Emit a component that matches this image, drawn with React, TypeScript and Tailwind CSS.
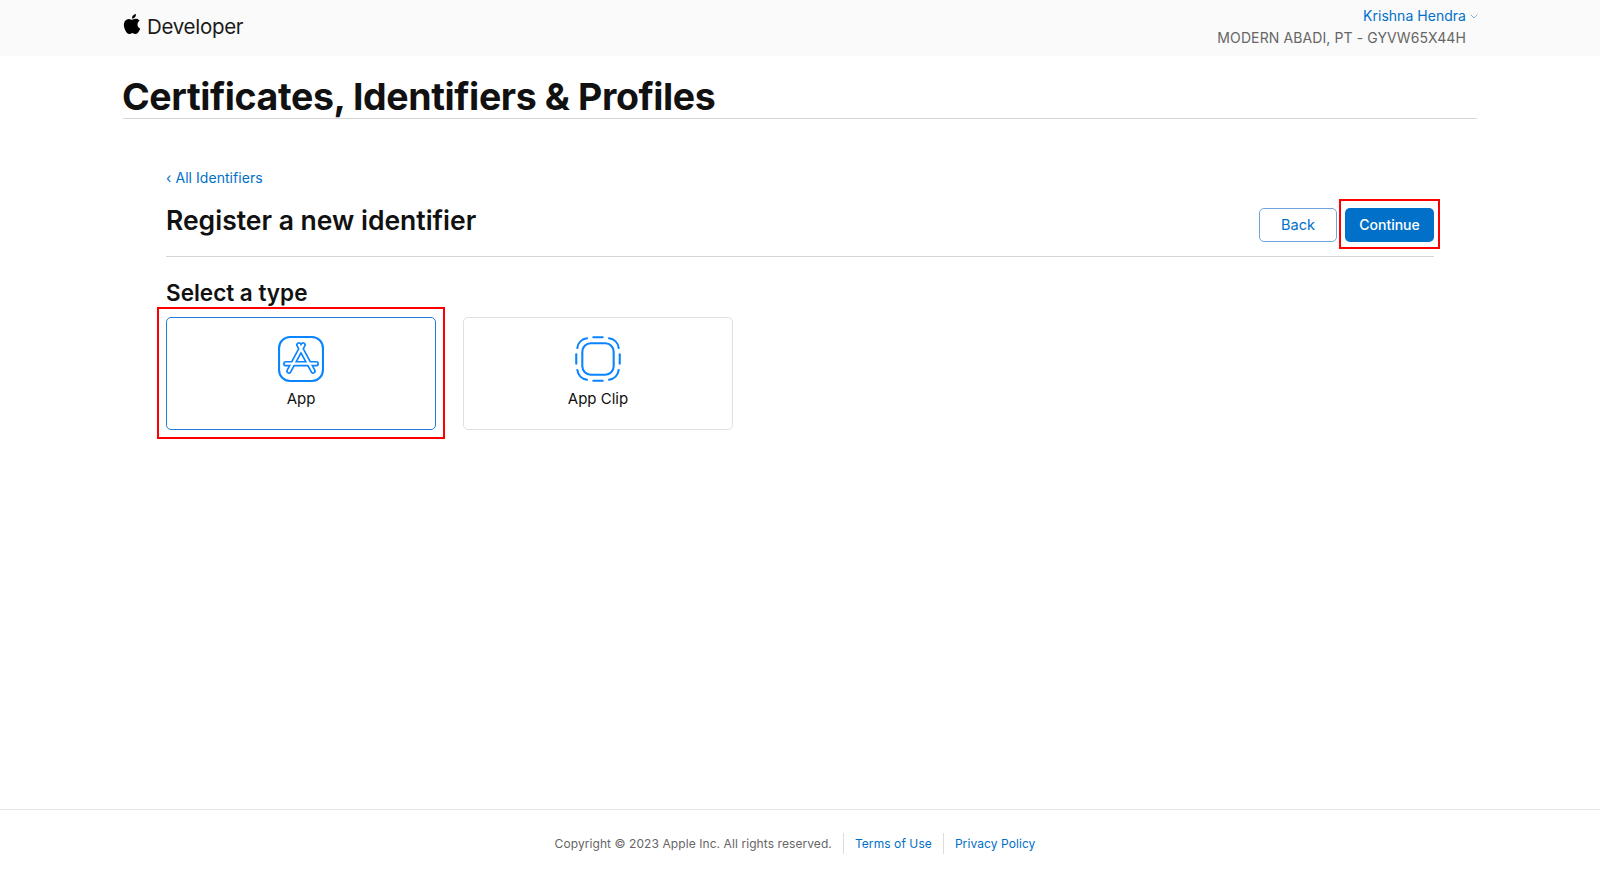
import { SiApple } from 'react-icons/si'

// App Store style mark: outlined sticks, drawn as thick blue lines with a thin white core
function AppIcon() {
  const sticks = ['M24 8.5 L10.5 33.5', 'M20 8.5 L33.5 33.5', 'M7.5 26.5 H36.5']
  return (
    <svg width="46" height="46" viewBox="0 0 44 44" fill="none">
      <rect x="1" y="1" width="42" height="42" rx="10.5" stroke="#0a84ff" strokeWidth="2" />
      {sticks.map((d) => (
        <path key={d} d={d} stroke="#0a84ff" strokeWidth="5.4" strokeLinecap="round" />
      ))}
      {sticks.map((d) => (
        <path key={d + 'w'} d={d} stroke="#fff" strokeWidth="2.2" strokeLinecap="round" />
      ))}
    </svg>
  )
}

function AppClipIcon() {
  return (
    <svg width="46" height="46" viewBox="0 0 44 44" fill="none" stroke="#0a84ff" strokeWidth="2" strokeLinecap="round">
      <rect x="7" y="7" width="30" height="30" rx="8" />
      <path d="M17.5 1.2 H26.5" />
      <path d="M17.5 42.8 H26.5" />
      <path d="M1.2 17.5 V26.5" />
      <path d="M42.8 17.5 V26.5" />
      <path d="M2.2 11.5 C2.8 6.5 6.5 2.8 11.5 2.2" />
      <path d="M32.5 2.2 C37.5 2.8 41.2 6.5 41.8 11.5" />
      <path d="M41.8 32.5 C41.2 37.5 37.5 41.2 32.5 41.8" />
      <path d="M11.5 41.8 C6.5 41.2 2.8 37.5 2.2 32.5" />
    </svg>
  )
}

export default function App() {
  return (
    <div className="flex min-h-[878px] flex-col bg-white font-['Inter','Liberation_Sans',sans-serif] text-[#111]">
      {/* Top bar */}
      <header className="h-[56px] bg-[#fafafa]">
        <div className="ml-[123px] mr-[122px] flex justify-between">
          <div className="flex items-center gap-[5px] pt-[13px]">
            <SiApple className="-ml-[1px] mb-[14px] text-[20px] text-black" />
            <span className="mb-[8px] text-[20.5px] leading-[28px] tracking-[-0.3px] text-[#1a1a1a]">Developer</span>
          </div>
          <div className="flex flex-col items-end pt-[6px]">
            <div className="flex items-center gap-[4px] text-[14px] leading-[20px] tracking-[0.03px] text-[#0070c9]">
              Krishna Hendra
              <svg width="8" height="5" viewBox="0 0 8 5" fill="none" stroke="#7fa9d0" strokeWidth="0.9">
                <path d="M0.5 0.5 L4 4 L7.5 0.5" />
              </svg>
            </div>
            <div className="mr-[12px] mt-[2px] text-[14px] leading-[20px] tracking-[0.1px] text-[#666]">
              MODERN ABADI, PT - GYVW65X44H
            </div>
          </div>
        </div>
      </header>

      <main className="flex-1">
        <div className="mx-[123px] border-b border-[#d6d6d6]">
          <h1 className="-ml-[1px] pt-[19px] text-[37.5px] font-bold leading-[43px] tracking-[-0.4px] text-[#111]">
            Certificates, Identifiers &amp; Profiles
          </h1>
        </div>

        <div className="ml-[166px] mr-[166px] pt-[49px]">
          <a className="block text-[14px] leading-[20px] tracking-[0.05px] text-[#0070c9]">‹ All Identifiers</a>

          <div className="mt-[8px] flex items-start justify-between border-b border-[#d6d6d6] pb-[14px]">
            <h2 className="pt-[7px] text-[26.5px] font-semibold leading-[34px] text-[#111]">Register a new identifier</h2>
            <div className="mt-[12px] flex gap-[8px]">
              <button className="h-[34px] w-[78px] rounded-[5px] border border-[#6ea3dc] bg-white text-[14.5px] text-[#0070c9]">
                Back
              </button>
              <div className="relative">
                <button className="h-[34px] w-[89px] rounded-[5px] bg-[#0070c9] pb-[1px] text-[14px] font-medium text-white">
                  Continue
                </button>
                <div className="absolute -bottom-[7px] -left-[6px] -right-[6px] -top-[9px] border-2 border-[#ff0000]" />
              </div>
            </div>
          </div>

          <h3 className="mt-[21px] text-[22.5px] font-semibold leading-[30px] text-[#111]">Select a type</h3>

          <div className="mt-[9px] flex gap-[27px]">
            <div className="relative">
              <div className="flex h-[113px] w-[270px] flex-col items-center rounded-[5px] border border-[#1f7fd8] bg-white pt-[18px]">
                <AppIcon />
                <span className="mt-[7px] text-[15px] leading-[20px]">App</span>
              </div>
              <div className="absolute -bottom-[9px] -left-[9px] -right-[9px] -top-[10px] border-2 border-[#ff0000]" />
            </div>
            <div className="flex h-[113px] w-[270px] flex-col items-center rounded-[5px] border border-[#e0e0e0] bg-white pt-[18px]">
              <AppClipIcon />
              <span className="mt-[7px] text-[15px] leading-[20px]">App Clip</span>
            </div>
          </div>
        </div>
      </main>

      {/* Footer */}
      <footer className="h-[69px] border-t border-[#e6e6e6]">
        <div className="flex items-center justify-center pr-[10px] pt-[23px] text-[12px] leading-[20px] tracking-[0.08px]">
          <span className="pr-[11px] text-[#666]">Copyright © 2023 Apple Inc. All rights reserved.</span>
          <a className="border-l border-[#ddd] px-[11px] pt-[1px] text-[#0070c9]">Terms of Use</a>
          <a className="border-l border-[#ddd] pl-[11px] pt-[1px] text-[#0070c9]">Privacy Policy</a>
        </div>
      </footer>
    </div>
  )
}
